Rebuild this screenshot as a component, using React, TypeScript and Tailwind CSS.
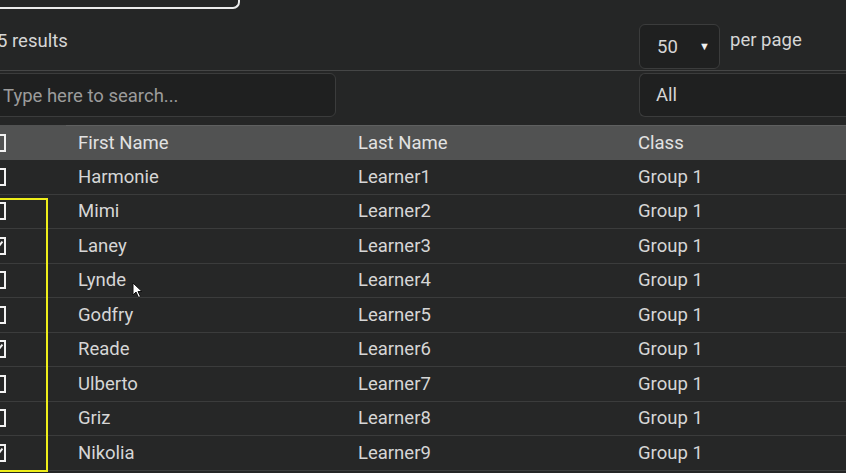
import { useState } from 'react';

const learners = [
  { first: 'Harmonie', last: 'Learner1', group: 'Group 1', checked: false },
  { first: 'Mimi', last: 'Learner2', group: 'Group 1', checked: false },
  { first: 'Laney', last: 'Learner3', group: 'Group 1', checked: true },
  { first: 'Lynde', last: 'Learner4', group: 'Group 1', checked: false },
  { first: 'Godfry', last: 'Learner5', group: 'Group 1', checked: false },
  { first: 'Reade', last: 'Learner6', group: 'Group 1', checked: true },
  { first: 'Ulberto', last: 'Learner7', group: 'Group 1', checked: false },
  { first: 'Griz', last: 'Learner8', group: 'Group 1', checked: false },
  { first: 'Nikolia', last: 'Learner9', group: 'Group 1', checked: true },
];

function Checkbox({ checked }: { checked: boolean }) {
  return (
    <span className="relative flex h-[18px] w-[16px] items-center justify-center border-2 border-[#f2f2f2]">
      {checked && (
        <svg width="10" height="10" viewBox="0 0 10 10" className="absolute left-[1px] top-[1px]">
          <path d="M1 5.5 L4 8.5 L9.5 1.5" stroke="#f2f2f2" strokeWidth="2" fill="none" />
        </svg>
      )}
    </span>
  );
}

export default function App() {
  const [search, setSearch] = useState('');

  return (
    <div className="relative h-[473px] w-[846px] overflow-hidden bg-[#252626] font-['Roboto',sans-serif] text-[18.5px] text-[#d6d6d6]">
      <div className="-ml-[20px] w-[886px]">
        {/* box cut off above */}
        <div className="-mt-[2px] h-[11px] w-[260px] rounded-br-[7px] border-2 border-t-0 border-[#ececec]" />

        {/* results + per page */}
        <div className="flex h-[62px] border-b border-[#454646]">
          <div className="w-[659px] shrink-0 pl-[17px] pt-[20px] leading-[24px]">5 results</div>
          <div className="flex items-start">
            <div className="mt-[15px] flex h-[45px] w-[81px] items-center justify-between rounded-[6px] border border-[#3b3c3c] bg-[#1f2020] pl-[17px] pr-[9px] pt-[2px]">
              <span>50</span>
              <span className="text-[11px] text-[#f0f0f0]">▼</span>
            </div>
            <span className="ml-[10px] pt-[19px] leading-[24px]">per page</span>
          </div>
        </div>

        {/* filters */}
        <div className="flex pb-[8px] pt-[2px]">
          <input
            value={search}
            onChange={e => setSearch(e.target.value)}
            placeholder="Type here to search..."
            className="h-[44px] w-[356px] shrink-0 rounded-[6px] border border-[#3b3c3c] bg-[#1f2020] pl-[22px] pt-[2px] text-[18.5px] text-[#d6d6d6] outline-none placeholder:text-[#9c9c9c]"
          />
          <div className="ml-[303px] flex h-[44px] w-[227px] shrink-0 items-center rounded-[6px] border border-[#3b3c3c] border-r-0 bg-[#1f2020] pl-[16px] pt-[2px]">
            All
          </div>
        </div>

        {/* table */}
        <div className="grid h-[35px] grid-cols-[86px_280px_280px_1fr] items-center bg-[#515252] text-[#e2e2e2]">
          <div className="pl-[10px]"><Checkbox checked={false} /></div>
          <div className="flex h-full items-center border-t border-[#5f6060] pt-[1px] pl-[12px]">First Name</div>
          <div className="flex h-full items-center border-t border-[#5f6060] pt-[1px] pl-[12px]">Last Name</div>
          <div className="flex h-full items-center border-t border-[#5f6060] pt-[1px] pl-[12px]">Class</div>
        </div>
        {learners.map(l => (
          <div key={l.last} className="grid h-[34.5px] grid-cols-[86px_280px_280px_1fr] items-center border-b border-[#3b3c3c] bg-[#262727]">
            <div className="pl-[10px]"><Checkbox checked={l.checked} /></div>
            <div className="pl-[12px] pt-[2px]">{l.first}</div>
            <div className="pl-[12px] pt-[2px]">{l.last}</div>
            <div className="pl-[12px] pt-[2px]">{l.group}</div>
          </div>
        ))}
      </div>

      {/* highlight overlay */}
      <div className="absolute left-[-4px] top-[198px] h-[274px] w-[52px] border-2 border-[#eeee1a]" />

      {/* mouse cursor */}
      <svg className="absolute left-[132px] top-[282px]" width="11" height="17" viewBox="0 0 11 17">
        <path d="M1 1 L1 13 L4 10 L6.5 15.5 L8.5 14.5 L6 9.5 L10 9.5 Z" fill="#ffffff" stroke="#111111" strokeWidth="1" />
      </svg>
    </div>
  );
}
